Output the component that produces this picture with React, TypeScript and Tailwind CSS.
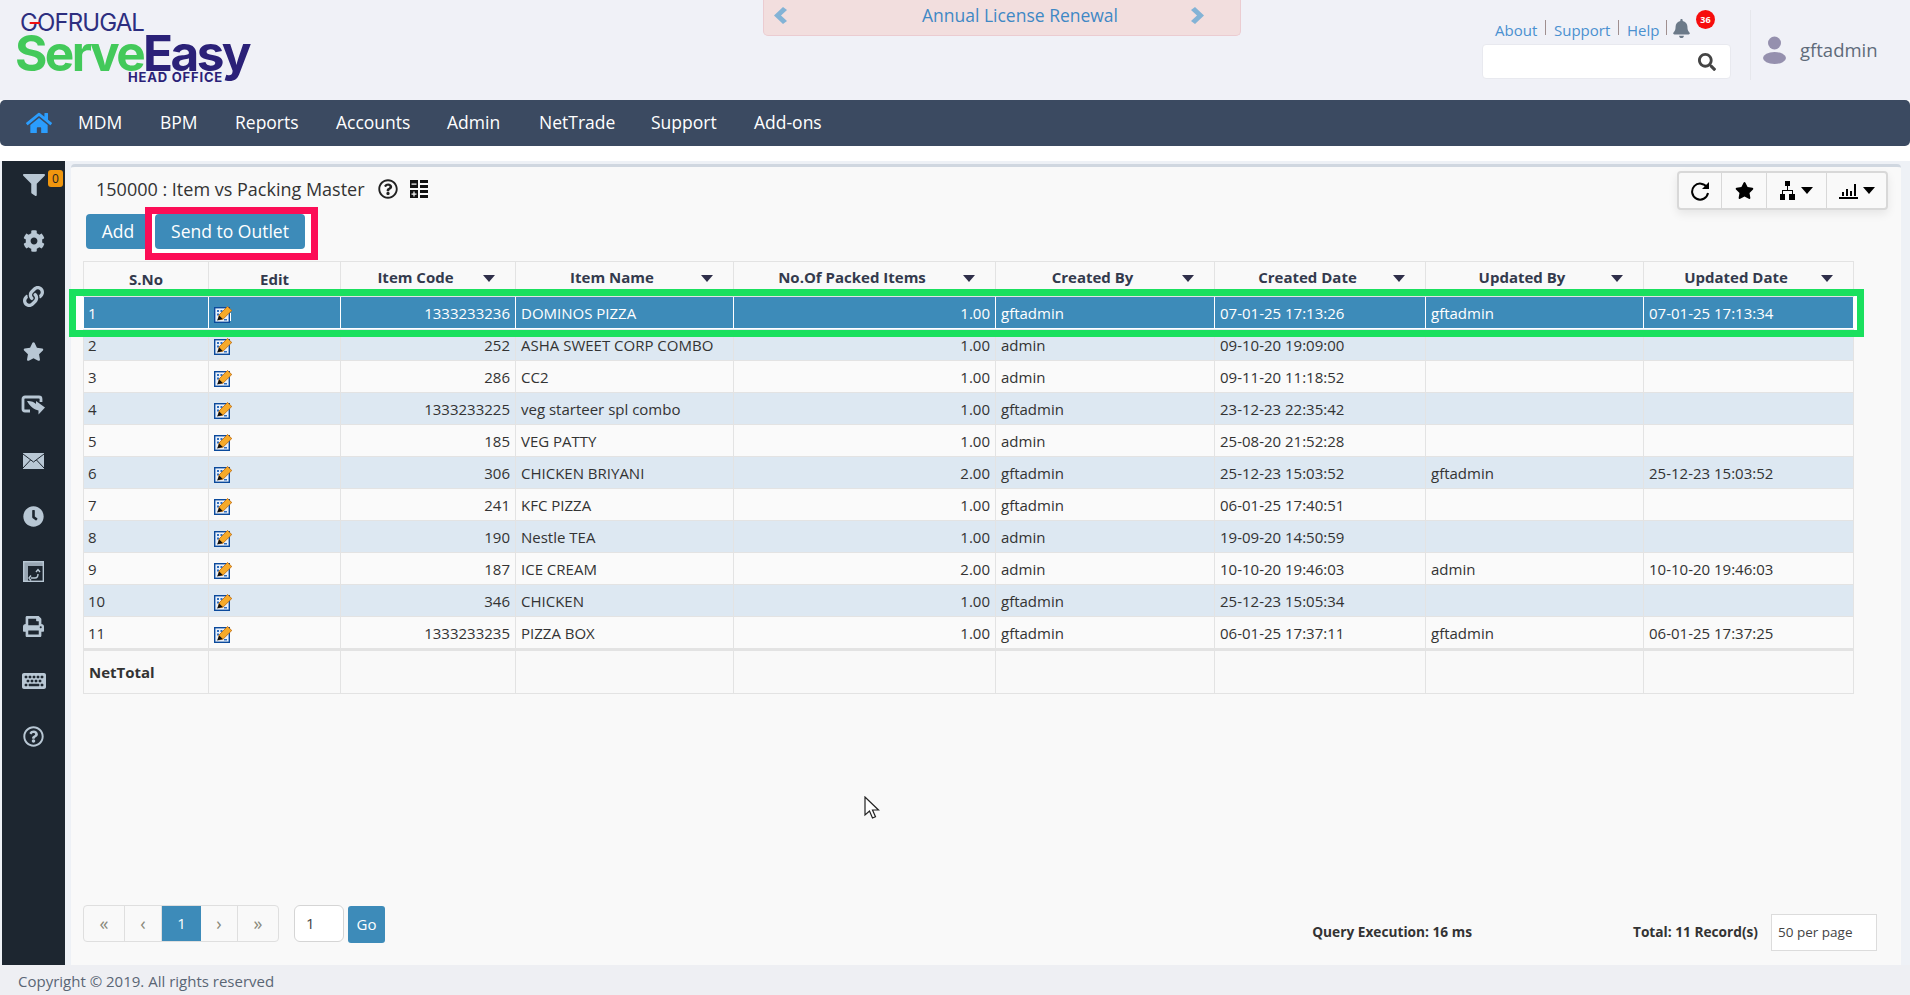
import React from "react";
import { FaHome, FaBell, FaSearch, FaFilter, FaCog, FaLink, FaStar, FaClock, FaPrint, FaKeyboard, FaRegQuestionCircle } from "react-icons/fa";

const rows = [
  ["1", "1333233236", "DOMINOS PIZZA", "1.00", "gftadmin", "07-01-25 17:13:26", "gftadmin", "07-01-25 17:13:34"],
  ["2", "252", "ASHA SWEET CORP COMBO", "1.00", "admin", "09-10-20 19:09:00", "", ""],
  ["3", "286", "CC2", "1.00", "admin", "09-11-20 11:18:52", "", ""],
  ["4", "1333233225", "veg starteer spl combo", "1.00", "gftadmin", "23-12-23 22:35:42", "", ""],
  ["5", "185", "VEG PATTY", "1.00", "admin", "25-08-20 21:52:28", "", ""],
  ["6", "306", "CHICKEN BRIYANI", "2.00", "gftadmin", "25-12-23 15:03:52", "gftadmin", "25-12-23 15:03:52"],
  ["7", "241", "KFC PIZZA", "1.00", "gftadmin", "06-01-25 17:40:51", "", ""],
  ["8", "190", "Nestle TEA", "1.00", "admin", "19-09-20 14:50:59", "", ""],
  ["9", "187", "ICE CREAM", "2.00", "admin", "10-10-20 19:46:03", "admin", "10-10-20 19:46:03"],
  ["10", "346", "CHICKEN", "1.00", "gftadmin", "25-12-23 15:05:34", "", ""],
  ["11", "1333233235", "PIZZA BOX", "1.00", "gftadmin", "06-01-25 17:37:11", "gftadmin", "06-01-25 17:37:25"],
];

const Caret = ({ className = "" }: { className?: string }) => (
  <svg width="12" height="7" viewBox="0 0 12 7" className={className}><path d="M0 0h12L6 7z" fill="currentColor" /></svg>
);

const EditIcon = () => (
  <svg width="18" height="17" viewBox="0 0 18 17">
    <rect x="0.7" y="1.7" width="14.6" height="14.6" fill="#eaf1fa" stroke="#0b4a9c" strokeWidth="1.4" />
    <path d="M3 4h2v2H3zM3 7.500h2v2H3zM6.500 4h2v2h-2zM10 13h3v1.500h-3z" fill="#2f6fc0" />
    <path d="M13.500 0.500 L17.800 4.500 L9 13.200 L4.500 13.800 L5 9 Z" fill="#f6aa2a" stroke="#b9660c" strokeWidth="0.800" />
    <path d="M5.200 9.500 L3 14.500 L8.800 13 Z" fill="#111" />
  </svg>
);

const ShareIcon = () => (
  <svg width="25" height="22" viewBox="0 0 25 22">
    <path d="M4 2h14a2 2 0 0 1 2 2v3M9 16H4a2 2 0 0 1-2-2V4a2 2 0 0 1 2-2" fill="none" stroke="#b8c7d4" strokeWidth="2.8" />
    <path d="M6 6c5 0 7 1 9 3V6l9 6.500-6.500 7v-4c-4-1-8-3-11.500-9.500z" fill="#b8c7d4" />
  </svg>
);

const MailIcon = () => (
  <svg width="21" height="16" viewBox="0 0 21 16">
    <rect width="21" height="16" fill="#b8c7d4" />
    <path d="M0 1l10.500 8L21 1M0 15l7.500-8M21 15l-7.500-8" fill="none" stroke="#1d2630" strokeWidth="1" />
  </svg>
);

const TableSwap = () => (
  <svg width="21" height="21" viewBox="0 0 21 21">
    <rect x="0.700" y="0.700" width="19.600" height="19.600" fill="none" stroke="#b8c7d4" strokeWidth="1.400" />
    <path d="M1 1h19v4H1zM1 5h4v15H1z" fill="#b8c7d4" opacity="0.800" />
    <path d="M8 17h4c2 0 3-1 3-4M13 11l2-2.500 2 2.500M8 14.500 6 17l2 2.500" fill="none" stroke="#b8c7d4" strokeWidth="1.400" />
  </svg>
);

const OrgIcon = () => (
  <svg width="15" height="19" viewBox="0 0 15 19" fill="#000">
    <rect x="5" y="0" width="5" height="5" />
    <rect x="0" y="13" width="5" height="6" />
    <rect x="9" y="13" width="6" height="6" />
    <path d="M7 5h1v4h5v4h-1v-3H3v3H2V9h5z" />
  </svg>
);

const ChartIcon = () => (
  <svg width="19" height="16" viewBox="0 0 19 16" fill="#000">
    <rect x="0" y="14" width="19" height="2" />
    <rect x="3" y="9" width="2" height="4" />
    <rect x="7" y="6" width="2" height="7" />
    <rect x="11" y="8" width="2" height="5" />
    <rect x="15" y="1" width="2" height="12" />
  </svg>
);

const CalcIcon = () => (
  <svg width="18" height="18" viewBox="0 0 18 18">
    <rect x="0" y="0" width="8" height="8" fill="#111" />
    <rect x="0" y="10" width="8" height="8" fill="#111" />
    <rect x="10" y="0" width="8" height="3" fill="#111" />
    <rect x="10" y="5" width="8" height="3" fill="#111" />
    <rect x="10" y="10" width="8" height="3" fill="#111" />
    <rect x="10" y="15" width="8" height="3" fill="#111" />
    <rect x="1.500" y="3.500" width="5" height="1.200" fill="#fff" />
    <rect x="1.500" y="13.500" width="5" height="1.200" fill="#fff" />
    <rect x="3.400" y="11.500" width="1.200" height="5" fill="#fff" />
  </svg>
);

const sidebar = [
  <FaFilter size={22} color="#b8c7d4" />,
  <FaCog size={22} color="#b8c7d4" />,
  <FaLink size={21} color="#b8c7d4" />,
  <FaStar size={21} color="#b8c7d4" />,
  <ShareIcon />,
  <MailIcon />,
  <FaClock size={21} color="#b8c7d4" />,
  <TableSwap />,
  <FaPrint size={21} color="#b8c7d4" />,
  <FaKeyboard size={24} color="#b8c7d4" />,
  <FaRegQuestionCircle size={21} color="#b8c7d4" />,
];

const heads = ["Item Code", "Item Name", "No.Of Packed Items", "Created By", "Created Date", "Updated By", "Updated Date"];
const nav = [
  ["MDM", "w-[82px]"],
  ["BPM", "w-[75px]"],
  ["Reports", "w-[101px]"],
  ["Accounts", "w-[111px]"],
  ["Admin", "w-[92px]"],
  ["NetTrade", "w-[112px]"],
  ["Support", "w-[103px]"],
  ["Add-ons", "w-[80px]"],
];

export default function App() {
  return (
    <div className="relative w-[1910px] h-[995px] overflow-hidden bg-white font-['Open_Sans',sans-serif] text-[#333]">
      <header className="h-[100px] bg-[#f0f1f7] flex items-start">
        <div className="w-[763px] shrink-0 pl-[15px]">
          <div className="relative ml-[5px] mt-[13px] h-[20px] text-[24px] leading-[20px] tracking-[-0.900px] text-[#2d2e7f] font-['Inter',sans-serif]">
            GOFRUGAL
            <span className="absolute left-[10px] top-[9px] w-[10px] h-[2px] bg-[#f01010]" />
          </div>
          <div className="h-[38px] text-[49.500px] leading-[40px] font-bold tracking-[-2.600px] font-['Inter',sans-serif] whitespace-nowrap">
            <span className="text-[#43c95a]">Serve</span>
            <span className="text-[#2b2178]">Easy</span>
          </div>
          <div className="ml-[113px] h-[12px] text-[13px] leading-[12px] font-bold tracking-[0.800px] text-[#2b2178] font-['Inter',sans-serif]">HEAD OFFICE</div>
        </div>
        <div className="w-[478px] h-[36px] shrink-0 bg-[#f2dede] border border-t-0 border-[#ebccd1] rounded-b-[5px] flex items-center justify-between pl-[10px] pr-[36px] pb-[5px]">
          <svg width="13" height="17" viewBox="0 0 13 17"><path d="M9 0l4 3-6 5.500 6 5.500-4 3-9-8.500z" fill="#83b3d6" /></svg>
          <span className="text-[17.500px] text-[#3f88c5] ml-[62px]">Annual License Renewal</span>
          <svg width="13" height="17" viewBox="0 0 13 17"><path d="M4 0L0 3l6 5.500L0 14l4 3 9-8.500z" fill="#83b3d6" /></svg>
        </div>
        <div className="ml-[241px] w-[249px] shrink-0">
          <div className="relative h-[44px] pl-[13px] pt-[20px] flex items-start text-[15px] leading-[20px] text-[#4a90d0]">
            <span className="w-[42px]">About</span>
            <span className="w-px h-[15px] bg-[#a08f8f] ml-[8px] mr-[8px]" />
            <span className="w-[56px]">Support</span>
            <span className="w-px h-[15px] bg-[#a08f8f] ml-[8px] mr-[8px]" />
            <span className="w-[32px]">Help</span>
            <span className="w-px h-[15px] bg-[#a08f8f] ml-[7px] mr-[5px]" />
            <FaBell size={19} color="#6c7a89" className="-mt-[1px]" />
            <span className="absolute left-[214px] top-[10px] w-[19px] h-[19px] rounded-full bg-[#f60d0d] text-white text-[9px] leading-[19px] font-bold text-center">36</span>
          </div>
          <div className="h-[35px] bg-white rounded-[4px] border border-[#e8e9ef] flex items-center justify-end pr-[14px]">
            <FaSearch size={18} color="#444" />
          </div>
        </div>
        <div className="ml-[19px] mt-[10px] h-[70px] border-l border-[#e6e7ec] pl-[12px] pt-[9px] flex items-center gap-[14px]">
          <svg width="23" height="28" viewBox="0 0 23 28" fill="#9590ae">
            <circle cx="11.500" cy="7" r="6.500" />
            <ellipse cx="11.500" cy="22" rx="11.500" ry="6" />
          </svg>
          <span className="text-[18.500px] text-[#5f6b7a]">gftadmin</span>
        </div>
      </header>

      <nav className="h-[46px] bg-[#3b4a61] rounded-[5px] flex items-center text-white text-[17.500px] pb-[1px]">
        <div className="w-[78px] pl-[26px]"><FaHome size={26} color="#2b9dfd" /></div>
        {nav.map(([n, w]) => (
          <span key={n} className={w}>{n}</span>
        ))}
      </nav>

      <div className="h-[15px]" />

      <main className="h-[804px] flex bg-[#eef1f6] pl-[2px]">
        <aside className="w-[63px] bg-[#1d2630] flex flex-col items-center gap-[31px] pt-[13px] relative">
          {sidebar.map((ic, i) => (
            <div key={i} className={`h-[24px] flex items-center justify-center ${i === 0 ? "-mt-[1px] mb-[1px]" : ""}`}>{ic}</div>
          ))}
          <span className="absolute left-[46px] top-[9px] w-[15px] h-[17px] bg-[#f0960e] rounded-[3px] text-[12px] leading-[17px] text-center text-[#222]">0</span>
        </aside>
        <section className="ml-[6px] mt-[3px] w-[1830px] bg-[#f9f9f9] border-t-[3px] border-[#d0d7e0] rounded-t-[4px] flex flex-col">
          <div className="h-[47px] flex items-start justify-between pl-[25px] pr-[13px]">
            <div className="flex items-center h-[44px]">
              <span className="text-[18px] text-[#333]">150000 : Item vs Packing Master</span>
              <FaRegQuestionCircle size={20} color="#222" className="ml-[13px]" />
              <span className="ml-[12px] flex"><CalcIcon /></span>
            </div>
            <div className="mt-[4px] h-[39px] w-[211px] flex rounded-[4px] border-2 border-[#d8d8d8] bg-[#f9f9f9] shadow-[0_4px_10px_rgba(0,0,0,0.08)]">
              <div className="w-[43px] border-r border-[#d8d8d8] flex items-center justify-center">
                <svg width="20" height="20" viewBox="0 0 20 20" fill="none"><path d="M17 6.500A8 8 0 1 0 18 12" stroke="#000" strokeWidth="2" /><path d="M19 1v7h-7z" fill="#000" /></svg>
              </div>
              <div className="w-[45px] border-r border-[#d8d8d8] flex items-center justify-center"><FaStar size={19} color="#000" /></div>
              <div className="w-[60px] border-r border-[#d8d8d8] flex items-center justify-center gap-[6px]"><OrgIcon /><Caret className="text-black" /></div>
              <div className="flex-1 flex items-center justify-center gap-[5px]"><ChartIcon /><Caret className="text-black" /></div>
            </div>
          </div>

          <div className="pl-[15px] flex h-[35px]">
            <button className="w-[64px] h-[35px] bg-[#3d8bb9] text-white text-[17.500px] rounded-[4px]">Add</button>
            <div className="relative ml-[5px]">
              <div className="absolute -left-[10px] -top-[7px] w-[173px] h-[53px] bg-white border-[7px] border-[#fc0d56]" />
              <button className="relative w-[150px] h-[35px] bg-[#3d8bb9] text-white text-[17.500px] rounded-[4px]">Send to Outlet</button>
            </div>
          </div>

          <div className="relative ml-[12px] mt-[12px] w-[1771px]">
            <table className="w-[1771px] table-fixed border-separate border-spacing-0 text-[15px]">
              <colgroup>
                {[126, 132, 175, 218, 262, 219, 211, 218, 210].map((w, i) => (
                  <col key={i} style={{ width: w }} />
                ))}
              </colgroup>
              <thead>
                <tr className="h-[36px] text-[#333a4d]">
                  <th className="font-bold border border-[#e3e3e3] pt-[1px]">S.No</th>
                  <th className="font-bold border-t border-r border-b border-[#e3e3e3] pt-[1px]">Edit</th>
                  {heads.map((h) => (
                    <th key={h} className="font-bold border-t border-r border-b border-[#e3e3e3] pb-[3px]">
                      <div className="flex items-center pr-[20px]">
                        <span className="flex-1 text-center whitespace-nowrap pl-[7px]">{h}</span>
                        <Caret className="text-[#2f2f4a] mt-[1px]" />
                      </div>
                    </th>
                  ))}
                </tr>
              </thead>
              <tbody>
                {rows.map((r, i) => {
                  const sel = i === 0;
                  const bg = sel ? "bg-[#3d8bb9] text-white" : i % 2 === 1 ? "bg-[#dde8f2]" : "bg-[#fafafa]";
                  const bd = sel ? "border-white" : "border-[#e3e3e3]";
                  return (
                    <tr key={i} className="h-[32px]">
                      <td className={`${bg} ${bd} border-l border-r border-b pl-[4px] pr-[5px] pt-[1px] ${sel ? "text-[#33526e]" : ""}`}>{r[0]}</td>
                      <td className={`${bg} ${bd} border-r border-b px-[5px]`}>
                        <div className="relative pt-[3px]">
                          <EditIcon />
                          {sel && <span className="absolute left-[16px] top-[10px] w-px h-[8px] bg-white" />}
                        </div>
                      </td>
                      <td className={`${bg} ${bd} border-r border-b px-[5px] pt-[1px] text-right`}>{r[1]}</td>
                      <td className={`${bg} ${bd} border-r border-b px-[5px] pt-[1px] whitespace-nowrap`}>{r[2]}</td>
                      <td className={`${bg} ${bd} border-r border-b px-[5px] pt-[1px] text-right`}>{r[3]}</td>
                      <td className={`${bg} ${bd} border-r border-b px-[5px] pt-[1px]`}>{r[4]}</td>
                      <td className={`${bg} ${bd} border-r border-b px-[5px] pt-[1px]`}>{r[5]}</td>
                      <td className={`${bg} ${bd} border-r border-b px-[5px] pt-[1px]`}>{r[6]}</td>
                      <td className={`${bg} ${bd} border-r border-b px-[5px] pt-[1px]`}>{r[7]}</td>
                    </tr>
                  );
                })}
                <tr className="h-[45px]">
                  <td className="border-l border-r border-b border-t-2 border-[#e3e3e3] px-[5px] font-bold">NetTotal</td>
                  {[0, 1, 2, 3, 4, 5, 6, 7].map((k) => (
                    <td key={k} className="border-r border-b border-t-2 border-[#e3e3e3]" />
                  ))}
                </tr>
              </tbody>
            </table>
            <div className="absolute -left-[14px] top-[28px] w-[1795px] h-[48px] border-[7px] border-[#1ae05e]">
              <span className="absolute left-0 inset-y-0 w-[7px] bg-white" />
              <span className="absolute right-0 inset-y-0 w-[3px] bg-white" />
            </div>
          </div>

          <div className="mt-auto pb-[14px] pl-[12px] pr-[24px] flex items-start">
            <div className="h-[37px] flex border border-[#dfdfdf] rounded-[4px] bg-[#f9f9f9] text-[#8a8a7c] text-[18px]">
              <span className="w-[41px] border-r border-[#dfdfdf] flex items-center justify-center">«</span>
              <span className="w-[37px] border-r border-[#dfdfdf] flex items-center justify-center">‹</span>
              <span className="w-[39px] bg-[#3d8bb9] text-white text-[15px] flex items-center justify-center">1</span>
              <span className="w-[37px] border-r border-[#dfdfdf] flex items-center justify-center">›</span>
              <span className="w-[40px] flex items-center justify-center">»</span>
            </div>
            <div className="ml-[15px] w-[50px] h-[37px] bg-white border border-[#d5d5d5] rounded-[6px] pl-[11px] text-[15px] leading-[35px] text-[#444]">1</div>
            <button className="ml-[4px] mt-[1px] w-[37px] h-[37px] bg-[#3d8bb9] text-white text-[15px] rounded-[3px]">Go</button>
            <div className="ml-auto mt-[9px] h-[37px] flex items-center text-[13.700px] font-bold text-[#333]">
              <span>Query Execution: 16 ms</span>
              <span className="ml-[161px]">Total: 11 Record(s)</span>
              <div className="ml-[13px] w-[106px] h-[37px] bg-white border border-[#dcdcdc] pl-[6px] font-normal text-[13.500px] leading-[35px] text-[#444]">50 per page</div>
            </div>
          </div>
        </section>
      </main>

      <footer className="h-[30px] bg-[#eeeff3] pl-[18px] text-[15px] leading-[32px] text-[#5a6675]">Copyright © 2019. All rights reserved</footer>

      <svg className="absolute left-[864px] top-[796px]" width="18" height="25" viewBox="0 0 18 25">
        <path d="M1 1v18l4.500-4 3 7 3-1.300-3-6.700h6z" fill="#fff" stroke="#222" strokeWidth="1.200" />
      </svg>
    </div>
  );
}
